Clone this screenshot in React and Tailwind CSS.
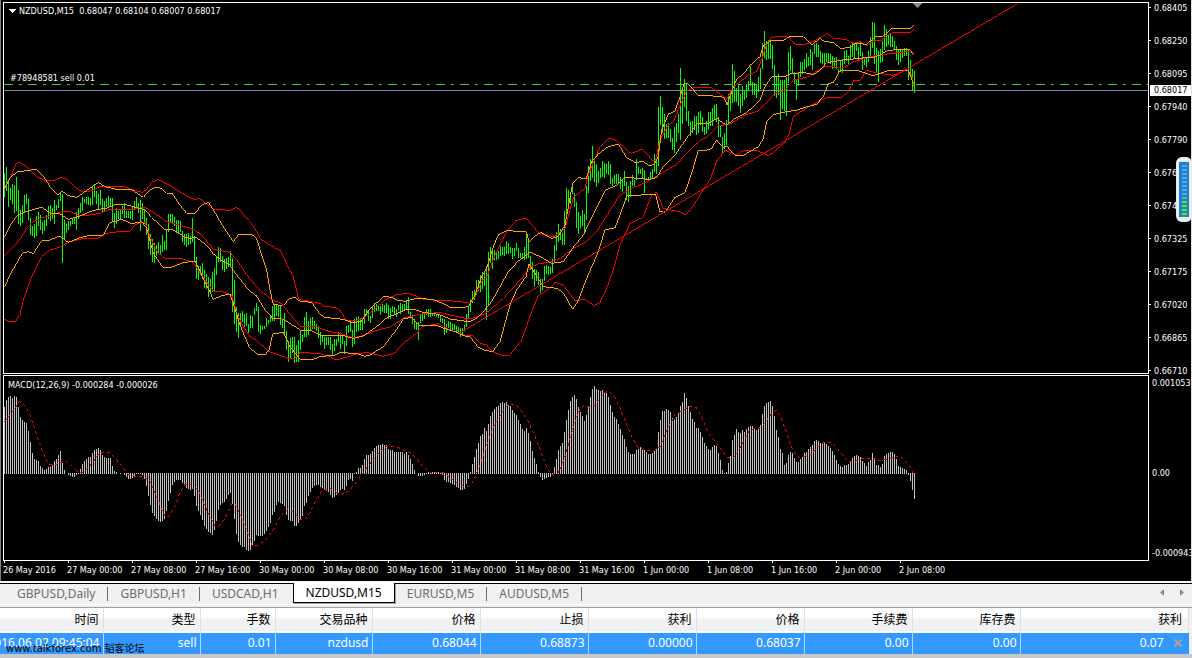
import { useState } from "react";

// plot coordinates are in thirds of a pixel, every run has its own origin
const BAR_RUNS = [
  {
    x: 12,
    y: 450,
    bars:
      "68-140 51-124 93-171 114-150 102-162 105-189 81-183 120-222 180-228 165-219 135-186 132-162 147-210 204-255 228-258 222-264 198-258 186-228 195-240 216-252 210-243 195-228 168-207 165-213 174-207 150-222 165-180 147-174 126-153 132-339 210-270 222-249 213-240 213-228 204-222 204-222 186-240 174-207 159-189 141-183 147-159 141-162 141-165 144-168 111-165 102-141 123-162 132-180 120-165 147-189 153-186 144-171 138-174 144-171 144-216 189-234 174-222 183-207 177-210 168-192 159-204 183-204 183-204 183-207 168-210 153-180 141-174 159-189 150-243 159-207 180-222 204-255 222-297 252-315 267-336 279-339 285-318 276-312 285-315 255-306 273-300 240-300 192-246 192-216 192-219 201-228 210-249 210-252 213-246 243-276 252-285 252-291 249-285 258-282 204-276 258-336 321-387 348-390 348-375 339-387 360-414 372-417 381-441 387-429 366-426 354-423 321-375 291-336 294-336 318-360 327-366 324-357 321-351 303-348 324-486 390-522 471-546 489-564 489-525 483-516 492-531 489-528 522-549",
  },
  {
    x: 750,
    y: 540,
    bars:
      "405-444 408-444 384-405 369-393 381-456 435-462 438-450 438-447 414-441 420-432 408-426 378-423 372-423 372-408 375-411 378-435 417-444 399-468 453-510 483-546 474-534 471-519 471-549 495-546 480-546 450-510 465-486 411-471 396-471 423-465 414-453 411-447 423-447 432-453 438-474 456-495 468-486 471-507 471-495 471-495 471-510 492-525 477-513 477-498 456-486 465-507 462-492 483-522 438-498 435-459 420-456 450-501 417-492 411-456 408-453 414-450 414-450 387-432 387-408 390-423 408-429 381-414 369-396 372-393 378-393 378-405 372-396 375-399 369-399 375-417 384-417 378-396 381-405 387-411 375-390 369-402 372-393 372-390 363-390 351-402 396-414 405-432 417-447 429-450 426-480 402-429 399-423 396-417 387-405 387-411 387-411 399-408 399-408 402-411 405-414 405-426 414-429 417-465 432-459 423-444 426-450 432-453 432-450 438-459 441-456 444-471 444-468 435-453 402-441",
  },
  {
    x: 1404,
    y: 390,
    bars:
      "531-567 507-546 483-519 480-510 450-495 450-483 435-486 426-477 423-468 408-570 366-528 351-399 360-417 360-390 363-390 363-387 348-378 351-375 351-378 333-372 339-372 351-369 354-387 354-378 339-363 354-384 369-384 369-387 351-390 306-387 327-384 378-420 396-447 417-471 420-453 426-465 447-489 447-480 408-453 405-432 408-435 411-432 387-429 345-399 306-363 282-336 297-330 309-345 243-345 174-258 180-237 186-222 159-192 189-231 216-294 246-312 258-294 240-288 252-309 168-270 108-189 87-153 48-144 90-156 102-171 123-159 114-144 93-141 99-144 102-132 93-135 102-162 144-168 135-162 132-162 132-162 141-177 150-186 123-168 156-210 168-216 153-201 135-168 150-168 87-150 111-132 117-132 114-144 120-189 144-150 141-150 126-147 117-144 72-126 90-132",
  },
  {
    x: 1974,
    y: 0,
    bars:
      "321-498 288-375 321-399 342-417 372-414 369-414 387-426 414-450 381-459 369-426 342-399 204-420 261-372 237-321 252-363 333-378 366-408 363-399 348-390 348-405 336-399 333-375 351-396 381-405 363-402 336-390 336-378 324-378 315-357 312-366 351-411 378-411 411-459 399-447 360-435 282-369 273-333 192-309 213-306 264-306 249-318 282-339 258-318 270-300 252-294 243-273 198-258 246-285 249-285 252-294 231-276 204-267 129-207 93-174 123-180 120-177 117-177 135-207 195-288 228-294 222-285 240-360 240-327 240-333 231-348 156-249 138-213 174-219 216-252 240-300 216-258 186-231 186-222 177-210 159-204 171-198 147-195 156-210 132-162 129-171 135-171 153-189 159-192 159-195 159-186 159-186 162-192 168-207 174-201 171-207 207-222 183-216 177-219 153-192 150-183 168-195 135-180 129-171 132-174 129-153 141-180 126-168 156-210 171-195 171-201 153-186 111-171 66-144 69-192 144-219 153-246 147-189 123-186 75-150 87-141 102-135 102-141 108-141 123-150 138-180 147-195 147-186 150-174 144-168 144-168 147-240 180-228 207-273 213-279",
  },
];

const BAND_ORIGINS = [
  [0, 450],
  [660, 540],
  [1350, 390],
  [1860, 0],
];

const RED = "#ff0000";
const ORANGE = "#ffa500";

const BANDS = [
  {
    color: RED,
    runs: [
      "13,120 22,95 35,75 47,43 58,37 75,46 95,65 110,80 135,92 165,90 185,82 205,90 225,112 250,127 275,122 300,110 375,109 390,117 427,127 440,118 455,97 475,88 490,97 510,107 540,126 580,148 600,146 640,178 690,181 708,172 720,180 735,200",
      "88,122 108,152 122,177 150,195 182,213 205,262 220,290 236,358 260,362 300,370 315,380 345,382 362,393 378,420 400,423 430,415 460,390 500,357 530,344 565,340 590,349 610,357 650,361 700,363 745,368",
      "60,520 75,500 95,455 112,437 135,375 170,305 198,271 230,265 240,278 268,310 312,320 345,295 370,203 385,190 405,175 415,135 432,92 450,50 475,25 495,29 520,50 543,70 577,58 590,70 607,92",
      "107,480 120,420 145,375 160,365 185,305 200,273 225,262 275,264 295,278 320,297 340,262 365,242 385,225 410,214 425,180 438,138 455,112 490,109 508,112 523,132 550,134 580,125 622,100 640,114 680,119 700,130 720,125 740,137 760,122 785,121 805,103 820,97 873,97 882,87",
    ],
  },
  {
    color: ORANGE,
    runs: [
      "13,118 30,85 50,66 85,61 108,58 130,78 150,110 175,136 185,122 205,137 230,142 255,125 295,98 315,110 350,118 395,119 430,142 450,120 470,111 485,115 500,130 518,132 540,165 560,190 585,190 605,165 625,157 640,180 665,222",
      "40,185 55,164 95,163 110,176 125,225 140,270 150,330 160,374 190,376 210,355 225,352 240,364 275,367 300,403 315,412 370,418 400,428 425,423 445,393 490,349 515,352 530,360 555,364 590,355 635,358 670,370 690,382 740,381",
      "55,531 75,495 95,440 112,410 130,350 145,315 170,302 225,305 230,308 237,335 255,318 272,307 305,326 325,318 345,285 368,160 385,142 408,147 425,95 445,72 475,50 505,42 530,83 555,97 580,95 600,108",
      "105,490 115,470 125,390 145,342 165,334 180,290 193,250 205,252 235,286 300,289 313,293 321,315 335,275 350,237 370,222 390,196 420,170 430,137 455,120 490,121 510,109 550,110 575,135 600,115 615,125 640,127 662,146 690,142 705,130 740,133 765,111 790,108 815,86 872,85 880,76",
    ],
  },
  {
    color: RED,
    runs: [
      "13,318 35,295 60,268 80,235 95,218 120,205 150,197 190,184 210,184 235,196 260,197 300,190 330,178 395,178 435,172 465,190 500,215 530,223 580,238 605,255 640,298 690,307 710,330",
      "88,295 122,333 150,355 185,372 215,408 240,438 290,441 330,455 370,463 400,474 430,466 465,453 510,441 555,413 610,401 660,398 700,407 740,416",
      "55,567 75,563 110,548 160,505 215,445 240,412 265,402 300,396 335,383 370,355 405,338 440,305 465,265 500,210",
      "0,585 40,562 75,548 115,525 170,493 200,460 240,422 265,408 295,378 330,372 375,345 415,333 465,280 495,270 520,240 560,232 600,207 620,198 665,205 700,186 750,170 800,162 865,155 882,158",
    ],
  },
  {
    color: ORANGE,
    runs: [
      "13,262 30,228 50,197 80,184 125,172 150,189 180,192 205,208 235,200 270,185 295,178 320,175 345,163 375,163 435,180 455,202 495,240 520,240 550,258 565,265 590,263 625,290 640,312 670,335 690,345 710,375",
      "88,332 110,348 135,390 160,417 185,416 210,430 240,450 275,453 305,468 370,467 400,475 430,468 470,440 500,414 540,397 560,387 580,388 610,397 655,403 690,417 745,425",
      "60,575 80,565 100,545 125,515 150,470 175,425 205,393 240,367 275,382 305,400 340,395 370,352 400,315 440,232 465,182 500,165 525,142 580,146",
      "85,540 110,532 130,500 165,465 200,415 230,372 265,370 290,355 320,376 345,355 380,338 420,300 435,260 455,230 490,231 510,222 550,217 580,224 600,210 620,188 670,180 720,175 740,173 760,173 780,165 800,153 830,148 870,150 882,165",
    ],
  },
  {
    color: RED,
    runs: [
      "13,508 25,514 48,513 60,495 70,450 95,380 125,320 150,300 180,292 205,276 250,266 290,267 320,250 355,245 388,246 405,225 420,217 435,217 450,260 475,310 495,325 545,325 580,338 605,375 640,423 665,425 695,435 710,490 730,530",
      "88,468 110,482 145,514 205,535 225,535 240,517 300,521 330,530 345,538 360,537 410,522 440,517 490,529 525,518 550,490 590,460 605,440 655,431 680,444",
      "0,600 25,608 45,616 70,618 90,640 110,645 125,663 160,678 180,675 215,630 245,545 265,497 300,475 315,457 340,465 375,512 405,508 432,527 450,518 470,475 490,420 510,345 540,280 575,264",
      "70,650 95,585 110,577 130,625 185,637 195,645 210,632 240,585 270,540 290,485 315,451 350,465 370,452 415,453 445,467 460,458 495,425 508,400 520,350 535,340 570,318 620,293 665,292 685,275 700,243 720,240 740,211 765,218 820,226 860,210 875,225 882,260",
    ],
  },
  {
    color: ORANGE,
    runs: [
      "13,412 35,365 68,309 85,305 100,311 125,272 150,270 178,258 205,277 240,263 270,256 308,258 330,218 365,208 395,221 425,215 440,235 460,310 488,352 515,352 550,338 585,333 610,385 640,448 665,437 690,432 700,460 720,525",
      "88,502 115,525 135,525 147,510 158,462 190,457 210,500 240,538 280,538 300,530 345,525 360,517 410,521 435,529 450,525 490,500 525,455 550,417 575,412 600,438 655,438 680,448 705,455 735,468",
      "60,620 85,652 105,662 128,664 150,635 180,525 200,480 228,440 237,402 255,430 280,470 320,475 340,488 368,538 385,512 410,445 445,365 465,300 495,293 512,250 530,198 590,194",
      "107,583 120,635 135,637 165,592 195,577 215,520 235,450 255,453 275,445 290,420 310,443 320,438 345,466 370,466 415,440 430,415 440,365 460,344 488,337 530,330 555,322 590,313 610,290 625,250 640,248 660,212 710,211 760,227 805,212 865,211 880,250",
    ],
  },
];

// histogram heights in pixels, one bar every 2px
const MACD_RUNS = [
  {
    x: 4,
    values: [
      67, 74, 77, 78, 76, 78, 77, 67, 57, 54, 52, 51, 43, 32, 21, 15, 14, 13, 8,
      6, 4, 5, 7, 7, 9, 13, 15, 19, 23, 11, 4, 0, -2, -3, -4, -4, -2, 1, 5, 10,
      13, 15, 17, 17, 21, 24, 25, 26, 24, 19, 17, 16, 16, 16, 8, 3, 2, 0, 1, 0,
      -2, -4, -6, -6, -5, -3, -1, 1, 1, -2, -6, -13, -23, -32, -40, -43, -46,
      -48, -49, -48, -46, -38, -28, -20, -12, -9, -7, -7, -7, -10, -13, -15,
      -16, -17, -16, -23, -33, -38, -42, -47, -53, -56, -59, -60, -62, -57, -48,
      -37, -32, -30, -29, -26, -22, -20, -31, -46, -61, -69, -72, -74, -74, -77,
      -78, -77, -73, -68, -62, -63, -63, -63, -61, -58, -54, -50, -42, -39, -32,
      -29, -30, -31, -33, -42, -47, -48, -48, -53, -53, -50,
    ],
  },
  {
    x: 300,
    values: [
      -47, -43, -33, -30, -23, -19, -15, -13, -12, -12, -14, -15, -16, -18, -19,
      -22, -25, -24, -22, -20, -17, -16, -17, -13, -7, -6, -8, 1, 2, 6, 6, 9,
      15, 19, 19, 20, 23, 26, 28, 29, 29, 30, 29, 29, 25, 24, 24, 22, 22, 22,
      22, 22, 20, 22, 19, 15, 10, 4, 0, -3, -3, -3, -2, -1, 2, 2, 2, 2, 2, 2, 1,
      -2, -7, -9, -9, -10, -11, -12, -14, -15, -17, -17, -16, -11, -6, 2, 10,
      17, 25, 31, 38, 40, 46, 43, 50, 58, 62, 65, 67, 68, 71, 72, 71, 72, 69,
      68, 64, 61, 59, 54, 50, 45, 43, 46, 41, 33, 23, 16, 10, 2, -4, -7, -6, -5,
      -4, -4, 1, 7, 15, 24, 28, 31, 42, 54, 64, 73, 77, 79, 75, 67, 62, 58, 53,
      59, 68, 77, 85, 88, 85, 84,
    ],
  },
  {
    x: 600,
    values: [
      83, 84, 82, 81, 77, 69, 62, 57, 55, 50, 45, 39, 35, 27, 22, 20, 20, 20,
      24, 25, 27, 25, 24, 22, 20, 20, 21, 23, 25, 42, 54, 63, 63, 65, 64, 62,
      56, 55, 57, 61, 68, 72, 81, 76, 68, 62, 55, 52, 46, 46, 42, 37, 31, 28,
      25, 24, 27, 29, 28, 21, 14, 4, 1, 2, 11, 18, 34, 39, 45, 42, 41, 44, 42,
      45, 47, 48, 48, 45, 44, 45, 49, 60, 68, 71, 72, 73, 68, 58, 44, 37, 25,
      21, 9, 11, 19, 22, 21, 16, 12, 12, 15, 17, 21, 22, 25, 27, 29, 33, 34, 33,
      31, 31, 31, 30, 28, 26, 23, 19, 14, 10, 8, 7, 9, 9, 10, 13, 16, 18, 19,
      18, 17, 13, 11, 8, 12, 14, 21, 15, 9, 9, 7, 10, 18, 20, 21, 22, 22, 20,
      15, 8, 7, 6, 5, 4, -2, -8, -17, -26,
    ],
  },
];

const SIGNAL_ORIGINS = [
  [0, 1110],
  [900, 1110],
  [1800, 1110],
];

const SIGNAL_RUNS = [
  "13,155 31,132 45,115 58,95 68,98 85,123 97,155 115,210 135,262 147,282 163,287 180,277 197,274 217,290 235,308 250,306 268,290 285,268 295,252 312,247 330,248 345,264 365,288 385,312 405,319 430,319 447,328 460,355 480,405 495,440 508,438 525,408 540,368 553,345 575,343 595,362 620,420 645,469 658,468 675,445 695,402 705,402 720,432 740,480 757,528 772,527 795,512 820,480 840,442 855,422 868,418 885,432 900,450",
  "15,448 30,428 50,385 70,358 90,356 110,368 130,371 148,362 175,330 195,300 230,256 250,235 268,227 295,233 315,243 335,250 350,266 370,292 395,310 430,307 450,322 470,337 490,349 508,348 522,330 540,285 560,225 580,170 600,138 620,108 632,103 650,107 665,125 685,155 710,210 730,265 745,302 760,316 775,308 792,270 810,205 825,155 840,115 850,106 870,112 885,105 900,85",
  "13,68 28,63 45,85 60,115 80,163 98,208 113,230 130,240 165,241 180,230 200,182 225,135 240,127 255,117 272,109 290,114 305,142 325,190 345,215 362,235 380,262 400,265 415,245 435,205 450,178 475,175 490,165 505,143 520,125 530,121 542,138 560,190 580,245 600,264 620,256 635,252 650,232 670,218 690,217 705,227 725,252 745,274 765,275 785,265 825,265 840,273 860,268 885,262 897,258 912,268 930,290 940,312",
];

const PRICES = [
  "0.68405",
  "0.68250",
  "0.68095",
  "0.67940",
  "0.67790",
  "0.67635",
  "0.67480",
  "0.67325",
  "0.67175",
  "0.67020",
  "0.66865",
  "0.66710",
];

const TIMES = [
  "26 May 2016",
  "27 May 00:00",
  "27 May 08:00",
  "27 May 16:00",
  "30 May 00:00",
  "30 May 08:00",
  "30 May 16:00",
  "31 May 00:00",
  "31 May 08:00",
  "31 May 16:00",
  "1 Jun 00:00",
  "1 Jun 08:00",
  "1 Jun 16:00",
  "2 Jun 00:00",
  "2 Jun 08:00",
];

const TABS = [
  "GBPUSD,Daily",
  "GBPUSD,H1",
  "USDCAD,H1",
  "NZDUSD,M15",
  "EURUSD,M5",
  "AUDUSD,M5",
];

const COLUMNS = [
  { title: "时间", value: "2016.06.02 09:45:04", width: "w-[103px]" },
  { title: "类型", value: "sell", width: "w-[97px]" },
  { title: "手数", value: "0.01", width: "w-[75px]" },
  { title: "交易品种", value: "nzdusd", width: "w-[97px]" },
  { title: "价格", value: "0.68044", width: "w-[108px]" },
  { title: "止损", value: "0.68873", width: "w-[108px]" },
  { title: "获利", value: "0.00000", width: "w-[108px]" },
  { title: "价格", value: "0.68037", width: "w-[108px]" },
  { title: "手续费", value: "0.00", width: "w-[108px]" },
  { title: "库存费", value: "0.00", width: "w-[108px]" },
];

const joinRuns = (runs, origins) =>
  runs
    .map((run, i) =>
      run
        .split(" ")
        .map((point) => {
          const [x, y] = point.split(",").map(Number);
          return `${x + origins[i][0]},${y + origins[i][1]}`;
        })
        .join(" ")
    )
    .join(" ");

const PriceChart = () => (
  <svg className="block h-[370px] w-full" shapeRendering="crispEdges">
    <line x1="0" y1="81.5" x2="100%" y2="81.5" stroke="#32cd32" strokeDasharray="9 6 3 6" />
    <line x1="0" y1="87.5" x2="100%" y2="87.5" stroke="#778899" />
    <g transform="translate(-4 -3) scale(0.333333)">
      {BAR_RUNS.map((run) =>
        run.bars.split(" ").map((bar, i) => {
          const [high, low] = bar.split("-").map(Number);
          return (
            <rect
              key={`${run.x}-${i}`}
              x={run.x + i * 6}
              y={run.y + high}
              width="3"
              height={low - high}
              fill="#00ff00"
            />
          );
        })
      )}
      {BANDS.map((band, i) => (
        <polyline
          key={i}
          points={joinRuns(band.runs, BAND_ORIGINS)}
          fill="none"
          stroke={band.color}
          strokeWidth="3"
        />
      ))}
      <line x1="1385" y1="995" x2="3051" y2="12" stroke={RED} strokeWidth="3" />
    </g>
    <path d="M909 0h9l-4 5h-1z" fill="#778899" />
  </svg>
);

const MacdChart = () => (
  <svg className="block h-[184px] w-full" shapeRendering="crispEdges">
    <g transform="translate(-4 -376)">
      {MACD_RUNS.map((run) =>
        run.values.map((value, i) => (
          <rect
            key={`${run.x}-${i}`}
            x={run.x + i * 2}
            y={value > 0 ? 474 - value : 473}
            width="1"
            height={Math.abs(value)}
            fill="#c0c0c0"
          />
        ))
      )}
      <polyline
        transform="scale(0.333333)"
        points={joinRuns(SIGNAL_RUNS, SIGNAL_ORIGINS)}
        fill="none"
        stroke={RED}
        strokeWidth="3"
        strokeDasharray="9 9"
      />
    </g>
  </svg>
);

const Gauge = () => (
  <div className="absolute top-[157px] right-[-1px] flex h-[65px] w-4 flex-col rounded-md bg-[#ececec] px-[3px] py-[5px]">
    <div className="flex flex-1 flex-col items-center gap-[2px] bg-[#2080d0] pt-[3px]">
      {Array.from({ length: 13 }, (_, i) => (
        <span
          key={i}
          className={`h-[2px] w-[5px] ${i < 9 ? "bg-[#5aa5e2]" : "bg-[#55ee11]"}`}
        />
      ))}
    </div>
  </div>
);

const ChartArea = () => (
  <div className="flex border-l border-[#808080] bg-black font-['DejaVu_Sans_Condensed','DejaVu_Sans',sans-serif] text-[9px] leading-4 text-white">
    <div className="min-w-0 flex-1 pt-[2px] pl-[2px]">
      <div className="relative border border-white">
        <PriceChart />
        <div className="absolute top-0 left-1 flex items-center gap-[3px] whitespace-pre">
          <svg width="8" height="4" shapeRendering="crispEdges">
            <path d="M0 0h8l-4 4z" fill="#fff" />
          </svg>
          <span>NZDUSD,M15  0.68047 0.68104 0.68007 0.68017</span>
        </div>
        <span className="absolute top-[67px] left-[6px]">#78948581 sell 0.01</span>
      </div>
      <div className="relative mt-px border border-white">
        <MacdChart />
        <span className="absolute top-px left-1">MACD(12,26,9) -0.000284 -0.000026</span>
      </div>
      <div className="flex h-5 overflow-hidden">
        {TIMES.map((time) => (
          <div key={time} className="w-16 shrink-0">
            <div className="ml-px h-[2px] w-px bg-white" />
            <div className="leading-[14px] whitespace-nowrap">{time}</div>
          </div>
        ))}
      </div>
    </div>
    <div className="relative w-[43px] shrink-0 border-r border-[#e0e0e0]">
      {PRICES.map((price) => (
        <div key={price} className="flex h-[33px] gap-[3px] last-of-type:h-3">
          <span className="mt-[7px] h-px w-[2px] bg-white" />
          <span>{price}</span>
        </div>
      ))}
      <span className="absolute top-[85px] right-0 left-px bg-white pl-1 leading-[11px] text-black">
        0.68017
      </span>
      <section className="absolute top-[375px] right-0 left-0 flex h-[186px] flex-col overflow-hidden pl-[3px]">
        <span className="h-[90px]">0.001053</span>
        <span>0.00</span>
        <span className="mt-auto">-0.000943</span>
      </section>
      <Gauge />
    </div>
  </div>
);

const TabBar = () => {
  const [active, setActive] = useState("NZDUSD,M15");

  return (
    <div className="border-t-2 border-[#f8f8f8] bg-[#f0f0f0]">
      <div className="flex h-[21px] items-start border-t border-black pl-[5px] text-[12px] leading-[19px]">
        {TABS.map((tab, i) => (
          <div key={tab} className="flex items-center">
            <button
              onClick={() => setActive(tab)}
              className={
                tab === active
                  ? "-mt-px ml-[2px] border-x border-b border-black bg-white px-3 text-black shadow-[1px_1px_0_#a0a0a0]"
                  : "px-3 text-[#6d6d6d]"
              }
            >
              {tab}
            </button>
            {tab !== active && TABS[i + 1] !== active && (
              <span className="h-[14px] w-px bg-[#6d6d6d]" />
            )}
          </div>
        ))}
        <div className="mt-[5px] mr-2 ml-auto flex gap-[14px]">
          <button aria-label="Previous">
            <svg width="5" height="7">
              <path d="M4 0v7L0 3.5z" fill="#8a8a8a" />
            </svg>
          </button>
          <button aria-label="Next">
            <svg width="5" height="7">
              <path d="M1 0v7l4-3.5z" fill="#8a8a8a" />
            </svg>
          </button>
        </div>
      </div>
      <div className="h-[3px] border-t border-white" />
    </div>
  );
};

const OrdersTable = () => (
  <div className="relative border-t border-[#a0a0a0] bg-[#f0f0f0] pr-[3px] text-[12px]">
    <table className="w-full table-fixed border-collapse">
      <thead>
        <tr className="h-6 border-b border-white bg-linear-to-b from-white from-40% to-[#f0f1f3] to-50%">
          {COLUMNS.map((col, i) => (
            <th
              key={i}
              className={`${col.width} border-r border-[#dfe0e2] p-0 pr-1 text-right leading-[22px] font-normal text-black`}
            >
              {col.title}
            </th>
          ))}
          <th className="border-r border-[#dfe0e2] p-0 pr-[6px] text-right leading-[22px] font-normal text-black">
            获利
          </th>
        </tr>
      </thead>
      <tbody>
        <tr className="h-[21px] bg-[#3399ff] text-white">
          {COLUMNS.map((col, i) => (
            <td key={i} className="border-r border-[#b8d8f8] p-0 pr-[3px] pb-px leading-5">
              <div className="flex justify-end overflow-hidden whitespace-nowrap">{col.value}</div>
            </td>
          ))}
          <td className="p-0 pr-[7px] pb-px leading-5">
            <div className="flex items-center justify-end gap-[10px]">
              0.07
              <button aria-label="Close order">
                <svg width="8" height="8" stroke="#a8a29e" strokeWidth="2">
                  <path d="M0.5 0.5l7 7M7.5 0.5l-7 7" />
                </svg>
              </button>
            </div>
          </td>
        </tr>
      </tbody>
    </table>
    <div className="-mr-[3px] h-[5px] bg-[#c8c8c8]" />
    <span className="absolute bottom-[2px] left-[6px] font-['DejaVu_Sans','Noto_Sans_CJK_SC',sans-serif] text-[10px] leading-4 whitespace-nowrap text-black">
      www.talkforex.com 韬客论坛
    </span>
  </div>
);

const App = () => {
  return (
    <div className="w-full overflow-hidden font-['Noto_Sans','Noto_Sans_CJK_SC',sans-serif]">
      <ChartArea />
      <TabBar />
      <OrdersTable />
    </div>
  );
};

export default App;
